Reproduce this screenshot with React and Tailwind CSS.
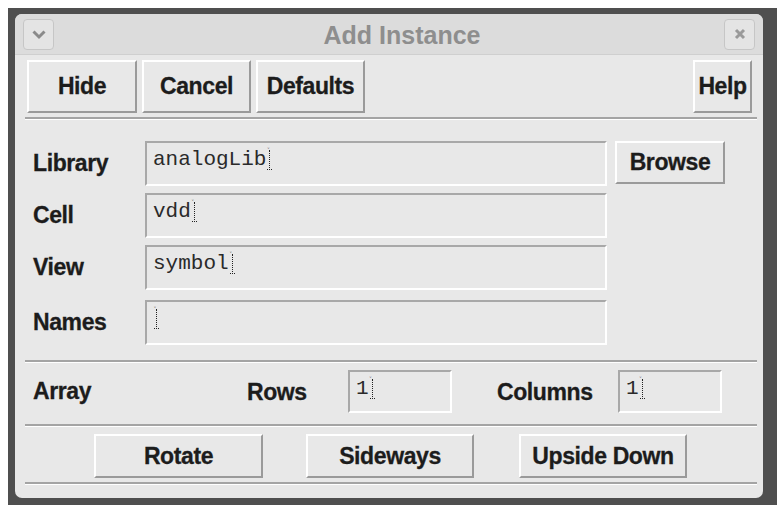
import React from 'react';

const LABEL =
  'font-["Liberation_Sans",Arial,sans-serif] font-bold text-[23px] text-[#1c1c1c] tracking-[-0.4px] [-webkit-text-stroke:0.3px_#1c1c1c]';

function BevelButton({ children, className = '' }) {
  return (
    <div
      className={`flex items-center justify-center border-2 border-t-white border-l-white border-b-[#9a9a9a] border-r-[#9a9a9a] bg-[#e8e8e8] ${LABEL} ${className}`}
    >
      {children}
    </div>
  );
}

function Separator({ className = '' }) {
  return (
    <div className={`ml-[10px] mr-[6px] border-t-2 border-[#a4a4a4] border-b border-b-white ${className}`} />
  );
}

function Cursor() {
  return (
    <span className="relative ml-[1px] inline-block h-[24px] w-[5px] align-top">
      <span className="absolute left-[2px] top-[2px] h-[20px] border-l border-dotted border-[#222]" />
      <span className="absolute left-0 top-0 text-[7px] leading-[6px] text-[#222]">˅</span>
      <span className="absolute left-0 top-[21px] h-0 w-[5px] border-t border-dotted border-[#222]" />
    </span>
  );
}

function TextField({ value, className = '' }) {
  return (
    <div
      className={`flex items-start border-2 border-t-[#a8a8a8] border-l-[#a8a8a8] border-b-white border-r-white bg-[#e8e8e8] pl-[6px] pt-[5px] ${className}`}
    >
      <span className='font-["Liberation_Mono","Courier_New",monospace] text-[21px] leading-[24px] text-[#2a2a2a]'>
        {value}
      </span>
      <Cursor />
    </div>
  );
}

function FormRow({ label, value, className = '', children }) {
  return (
    <div className={`flex items-stretch pl-[18px] ${className}`}>
      <div className={`flex w-[112px] items-center ${LABEL}`}>{label}</div>
      <TextField value={value} className="h-[45px] w-[462px]" />
      {children}
    </div>
  );
}

function TitleButton({ children }) {
  return (
    <div className="flex h-[31px] w-[31px] items-center justify-center rounded-[4px] border border-[#c6c6c6] bg-[#e4e4e4]">
      {children}
    </div>
  );
}

export default function App() {
  return (
    <div className="h-[510px] w-[777px] bg-white pl-[8px] pt-[8px]">
      <div className="h-[497px] w-[769px] bg-[#4f4f4f] pl-[7px] pt-[6px]">
        <div className="flex h-[484px] w-[748px] flex-col overflow-hidden rounded-[7px] bg-[#e8e8e8]">
          {/* title bar */}
          <div className="flex h-[41px] shrink-0 items-center border-b border-[#cfcfcf] bg-[#dcdcdc] px-[8px]">
            <TitleButton>
              <svg width="16" height="11" viewBox="0 0 16 11">
                <path d="M2.5 2.5 L8 8 L13.5 2.5" fill="none" stroke="#8a8a8a" strokeWidth="3" />
              </svg>
            </TitleButton>
            <div className='flex-1 pl-[26px] pt-[4px] text-center font-["Liberation_Sans",Arial,sans-serif] text-[25px] font-bold text-[#8e8e8e]'>
              Add Instance
            </div>
            <TitleButton>
              <svg width="14" height="14" viewBox="0 0 14 14">
                <path d="M3 3 L11 11 M11 3 L3 11" fill="none" stroke="#9a9a9a" strokeWidth="3" />
              </svg>
            </TitleButton>
          </div>

          {/* top buttons */}
          <div className="mt-[5px] flex h-[53px] gap-[5px] pl-[12px] pr-[11px]">
            <BevelButton className="w-[110px]">Hide</BevelButton>
            <BevelButton className="w-[109px]">Cancel</BevelButton>
            <BevelButton className="w-[109px]">Defaults</BevelButton>
            <div className="flex-1" />
            <BevelButton className="w-[59px]">Help</BevelButton>
          </div>

          <Separator className="mt-[4px]" />

          <FormRow label="Library" value="analogLib" className="mt-[21px]">
            <BevelButton className="ml-[8px] h-[43px] w-[110px]">Browse</BevelButton>
          </FormRow>
          <FormRow label="Cell" value="vdd" className="mt-[7px]" />
          <FormRow label="View" value="symbol" className="mt-[7px]" />
          <FormRow label="Names" value="" className="mt-[10px]" />

          <Separator className="mt-[15px]" />

          {/* array row */}
          <div className="mt-[7px] flex h-[43px] items-stretch pl-[18px]">
            <div className={`flex w-[214px] items-center ${LABEL}`}>Array</div>
            <div className={`flex w-[101px] items-center pt-[2px] ${LABEL}`}>Rows</div>
            <TextField value="1" className="w-[104px]" />
            <div className="w-[45px]" />
            <div className={`flex w-[121px] items-center pt-[2px] ${LABEL}`}>Columns</div>
            <TextField value="1" className="w-[104px]" />
          </div>

          <Separator className="mt-[11px]" />

          {/* orientation buttons */}
          <div className="mt-[7px] flex h-[44px] pl-[79px]">
            <BevelButton className="w-[169px]">Rotate</BevelButton>
            <BevelButton className="ml-[43px] w-[168px]">Sideways</BevelButton>
            <BevelButton className="ml-[45px] w-[168px]">Upside Down</BevelButton>
          </div>

          <Separator className="mt-[4px]" />
        </div>
      </div>
    </div>
  );
}
